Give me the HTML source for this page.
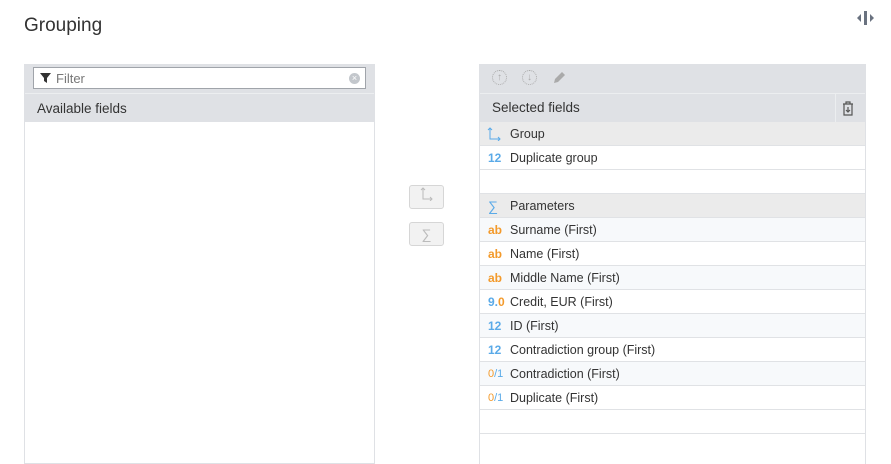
<!DOCTYPE html>
<html><head><style>
*{box-sizing:border-box;margin:0;padding:0}
body{width:891px;height:462px;background:#fff;font-family:"Liberation Sans",sans-serif;color:#333;position:relative;overflow:hidden;font-size:13px}
.abs{position:absolute}
h1{position:absolute;left:24px;top:15px;font-size:19px;font-weight:normal;color:#333}
.lp{left:24px;top:64px;width:351px;height:400px;border:1px solid #dfe1e5;border-top:none}
.bar{background:#dfe1e5}
.row{position:absolute;left:0;right:0;height:24px;border-bottom:1px solid #e0e2e5;line-height:24px;padding-left:30px;font-size:12.5px}
.ic{position:absolute;left:8px;top:0;font-size:12px;font-weight:bold}
.b{color:#5aaae8}.o{color:#f39a2b}
.btn{position:absolute;left:409px;width:35px;height:24px;border:1px solid #d6d6d6;border-radius:3px;background:#f2f2f2;color:#bbb;text-align:center;line-height:22px}
</style></head><body>
<h1>Grouping</h1>
<div class="abs" style="left:864px;top:11px;width:3px;height:14px;background:#6a7280"></div>
<div class="abs" style="left:857px;top:14px;width:0;height:0;border:4px solid transparent;border-right:4px solid #6a7280;border-left:none"></div>
<div class="abs" style="left:870px;top:14px;width:0;height:0;border:4px solid transparent;border-left:4px solid #6a7280;border-right:none"></div>

<div class="abs lp">
 <div class="bar" style="height:29px;position:relative">
  <div class="abs" style="left:8px;top:3px;width:333px;height:22px;background:#fff;border:1px solid #a0a4aa;">
   <svg class="abs" style="left:6px;top:5px" width="11" height="10" viewBox="0 0 11 10"><path d="M0 0H11L7 5V10L4 8V5Z" fill="#333"/></svg>
   <span class="abs" style="left:22px;top:3px;color:#777;font-size:13px">Filter</span>
   <div class="abs" style="right:5px;top:5px;width:11px;height:11px;border-radius:50%;background:#c3c7cc;color:#fff;font-size:9px;line-height:11px;text-align:center">×</div>
  </div>
 </div>
 <div class="bar" style="height:29px;line-height:29px;padding-left:12px;font-size:13.5px;border-top:1px solid #eceef0">Available fields</div>
</div>

<div class="btn" style="top:185px"><svg width="14" height="14" viewBox="0 0 14 14"><path d="M3 1V12H12M1 3L3 1L5 3M10 10L12 12L10 14" fill="none" stroke="#bbb"/></svg></div>
<div class="btn" style="top:222px;font-size:14px">∑</div>

<div class="abs" style="left:479px;top:64px;width:387px;height:400px;border-left:1px solid #dfe1e5;border-right:1px solid #dfe1e5">
 <div class="bar" style="height:29px;position:relative">
  <div class="abs" style="left:12px;top:6px;width:15px;height:15px;border:1px dotted #aaa;border-radius:50%;color:#aaa;font-size:10px;text-align:center;line-height:13px;font-weight:bold">↑</div>
  <div class="abs" style="left:42px;top:6px;width:15px;height:15px;border:1px dotted #aaa;border-radius:50%;color:#aaa;font-size:10px;text-align:center;line-height:13px;font-weight:bold">↓</div>
  <svg class="abs" style="left:72px;top:6px" width="15" height="15" viewBox="0 0 15 15"><path d="M2 13L3 9L10 2L13 5L6 12Z" fill="#aaa"/></svg>
 </div>
 <div class="bar" style="height:29px;line-height:28px;padding-left:12px;font-size:13.5px;border-top:1px solid #eceef0;position:relative">Selected fields
  <div class="abs" style="left:355px;top:0;width:1px;height:29px;background:#eceef0"></div>
  <svg class="abs" style="left:362px;top:7px" width="12" height="15" viewBox="0 0 12 15"><path d="M1 3H11M4 3V1H8V3M2 3V14H10V3M6 6V11M4 9L6 11L8 9" fill="none" stroke="#555" stroke-width="1.2"/></svg>
 </div>
 <div style="position:relative">
  <div class="row" style="top:0;background:#ebebeb"><svg class="abs" style="left:7px;top:5px" width="15" height="14" viewBox="0 0 15 14"><path d="M3 1V12H13M1 3L3 1L5 3M11 10L13 12L11 14" fill="none" stroke="#5aaae8"/></svg>Group</div>
  <div class="row" style="top:24px"><span class="ic b">12</span>Duplicate group</div>
  <div class="row" style="top:48px"></div>
  <div class="row" style="top:72px;background:#ebebeb"><span class="ic b" style="font-weight:normal;font-size:14px">∑</span>Parameters</div>
  <div class="row" style="top:96px;background:#f7f9fb"><span class="ic o">ab</span>Surname (First)</div>
  <div class="row" style="top:120px"><span class="ic o">ab</span>Name (First)</div>
  <div class="row" style="top:144px;background:#f7f9fb"><span class="ic o">ab</span>Middle Name (First)</div>
  <div class="row" style="top:168px"><span class="ic"><span class="b">9.</span><span class="o">0</span></span>Credit, EUR (First)</div>
  <div class="row" style="top:192px;background:#f7f9fb"><span class="ic b">12</span>ID (First)</div>
  <div class="row" style="top:216px"><span class="ic b">12</span>Contradiction group (First)</div>
  <div class="row" style="top:240px;background:#f7f9fb"><span class="ic" style="font-weight:normal;font-size:11px"><span class="o">0</span><span class="b">/1</span></span>Contradiction (First)</div>
  <div class="row" style="top:264px"><span class="ic" style="font-weight:normal;font-size:11px"><span class="o">0</span><span class="b">/1</span></span>Duplicate (First)</div>
  <div class="row" style="top:288px"></div>
 </div>
</div>
</body></html>
